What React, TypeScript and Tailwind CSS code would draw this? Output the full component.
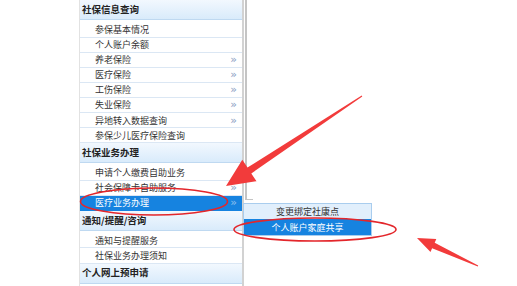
import React from "react";

const font = { fontFamily: '"Noto Sans CJK SC", "Noto Sans", sans-serif' };

function Header({ label }: { label: string }) {
  return (
    <div className="h-[23px] flex flex-col">
      <div className="h-[20px] flex items-center pl-[2px] bg-gradient-to-b from-[#f2f8fe] to-[#d9ebfb] border-b border-[#bfd9f1] text-[9.5px] font-bold text-[#222] leading-none">
        {label}
      </div>
    </div>
  );
}

function Item({ label, more, active }: { label: string; more?: boolean; active?: boolean }) {
  return (
    <div
      className={
        "h-[15.5px] flex items-center justify-between pl-[15px] pr-[5px] text-[9px] leading-none border-b " +
        (active ? "bg-[#1683e0] text-white border-[#1683e0]" : "text-[#333] border-[#dbe7f4]")
      }
    >
      <span>{label}</span>
      {more && (
        <span
          className={"text-[11px] leading-none " + (active ? "text-[#8fc0ee]" : "text-[#8aa0c2]")}
          style={{ fontFamily: '"DejaVu Sans", sans-serif' }}
        >
          »
        </span>
      )}
    </div>
  );
}

export default function App() {
  return (
    <div className="relative w-[517px] h-[286px] bg-white overflow-hidden" style={font}>
      <div className="flex h-full">
        <div className="w-[79px]" />
        <div className="w-[165px] h-full border-l border-[#e2e2e2] border-r-2 border-r-[#d2d2d2] flex flex-col">
          <Header label="社保信息查询" />
          <Item label="参保基本情况" />
          <Item label="个人账户余额" />
          <Item label="养老保险" more />
          <Item label="医疗保险" more />
          <Item label="工伤保险" more />
          <Item label="失业保险" more />
          <Item label="异地转入数据查询" more />
          <Item label="参保少儿医疗保险查询" />
          <Header label="社保业务办理" />
          <Item label="申请个人缴费自助业务" />
          <Item label="社会保障卡自助服务" more />
          <Item label="医疗业务办理" more active />
          <Header label="通知/提醒/咨询" />
          <Item label="通知与提醒服务" />
          <Item label="社保业务办理须知" />
          <Header label="个人网上预申请" />
        </div>
        <div className="w-[8px] h-[200px] ml-[1px] border-l-2 border-b border-[#c4c4c4]" />
      </div>

      {/* submenu popup */}
      <div className="absolute left-[243px] top-[203px] w-[129px] flex flex-col border border-[#a9cdee] text-[9px] leading-none">
        <div className="h-[15px] flex items-center justify-center bg-[#e1effc] text-[#333]">变更绑定社康点</div>
        <div className="h-[16px] flex items-center justify-center bg-[#1683e0] text-white">个人账户家庭共享</div>
      </div>

      {/* annotations */}
      <svg className="absolute inset-0 pointer-events-none" width="517" height="286" viewBox="0 0 517 286">
        <polygon
          points="362.3,96.4 251.3,173.4 256.5,181.2 226,186 242.3,159.8 247.5,167.6 361.7,95.6"
          fill="#f23b3b"
        />
        <polygon
          points="478.2,265.5 434.7,242.8 436.3,239.1 417,238 430.5,251.9 432.1,248.2 477.8,266.5"
          fill="#f23b3b"
        />
        <ellipse cx="154" cy="201.5" rx="73.5" ry="13.5" fill="none" stroke="#e3262b" strokeWidth="1.6" />
        <ellipse cx="315" cy="229.5" rx="81" ry="11.5" fill="none" stroke="#e3262b" strokeWidth="1.6" />
      </svg>
    </div>
  );
}
